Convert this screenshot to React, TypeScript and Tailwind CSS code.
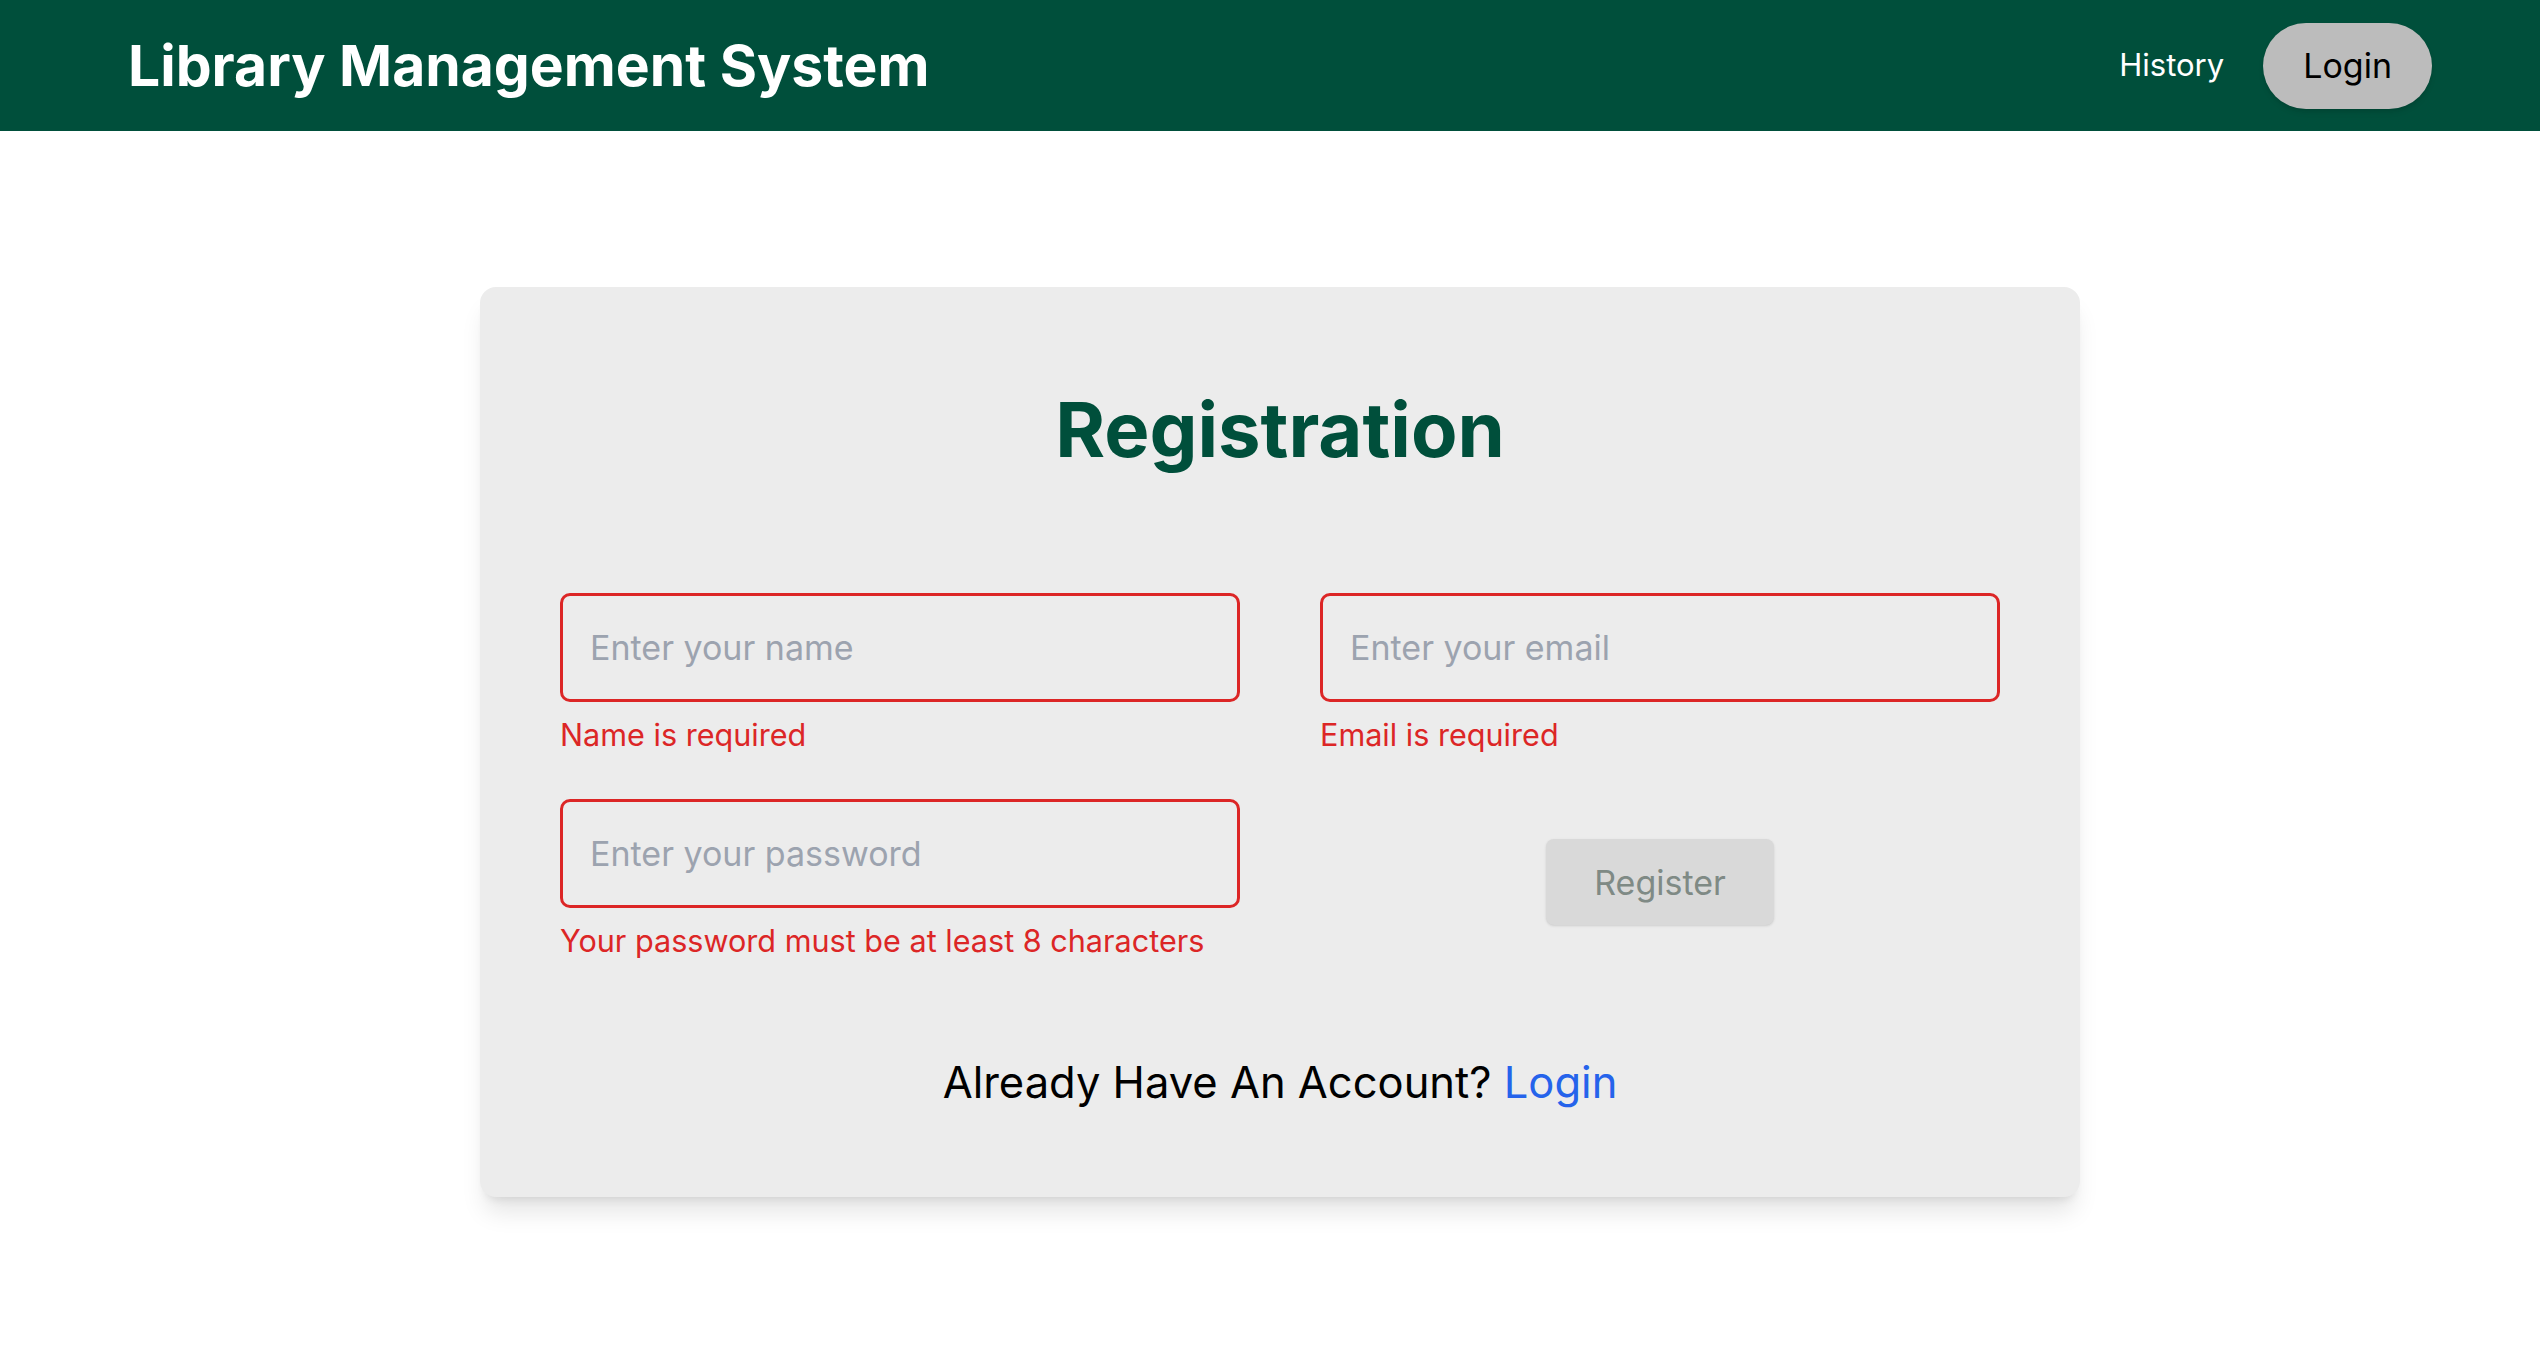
import React, { useState } from "react";

const Field = ({ placeholder, type, error }: { placeholder: string; type: string; error: string }) => {
  const [value, setValue] = useState("");
  return (
    <div>
      <input
        type={type}
        value={value}
        onChange={(e) => setValue(e.target.value)}
        placeholder={placeholder}
        className="w-full h-[109px] border-[3px] border-[#dc2626] rounded-[10px] px-[27px] text-[34px] bg-transparent placeholder:text-[#9ca3af] outline-none"
      />
      <p className="mt-[9px] text-[30.6px] leading-[48px] text-[#dc2626]">{error}</p>
    </div>
  );
};

const App = () => {
  return (
    <div className="min-h-screen bg-white font-['Inter',sans-serif]">
      <header className="h-[131px] bg-[#004f3b] flex items-center justify-between pl-[128px] pr-[108px]">
        <h1 className="text-[57px] font-bold text-white">Library Management System</h1>
        <nav className="flex items-center gap-[39px]">
          <a href="#" className="text-[31px] text-white">
            History
          </a>
          <button className="h-[86px] px-[40px] rounded-full bg-[#bcbcbc] text-[34px] text-black shadow-md">Login</button>
        </nav>
      </header>

      <main className="pt-[156px] pb-[100px]">
        <div className="ml-[480px] w-[1600px] rounded-2xl bg-[#ececec] shadow-xl pt-[104px] pb-[82px] px-[80px]">
          <h2 className="text-center text-[76px] leading-[76px] font-bold text-[#004f3b]">Registration</h2>

          <form className="mt-[126px] grid grid-cols-2 gap-x-[80px] gap-y-[40px]" onSubmit={(e) => e.preventDefault()}>
            <Field placeholder="Enter your name" type="text" error="Name is required" />
            <Field placeholder="Enter your email" type="email" error="Email is required" />
            <Field placeholder="Enter your password" type="password" error="Your password must be at least 8 characters" />
            <div className="flex items-center justify-center">
              <button type="submit" className="h-[86px] px-[48px] rounded-lg bg-[#d9d9d9] text-[34px] text-[#7f8a85] shadow-sm">
                Register
              </button>
            </div>
          </form>

          <p className="mt-[84px] text-center text-[43.5px] leading-[66px] text-black">
            Already Have An Account?{" "}
            <a href="#" className="text-[#2563eb]">
              Login
            </a>
          </p>
        </div>
      </main>
    </div>
  );
};

export default App;
